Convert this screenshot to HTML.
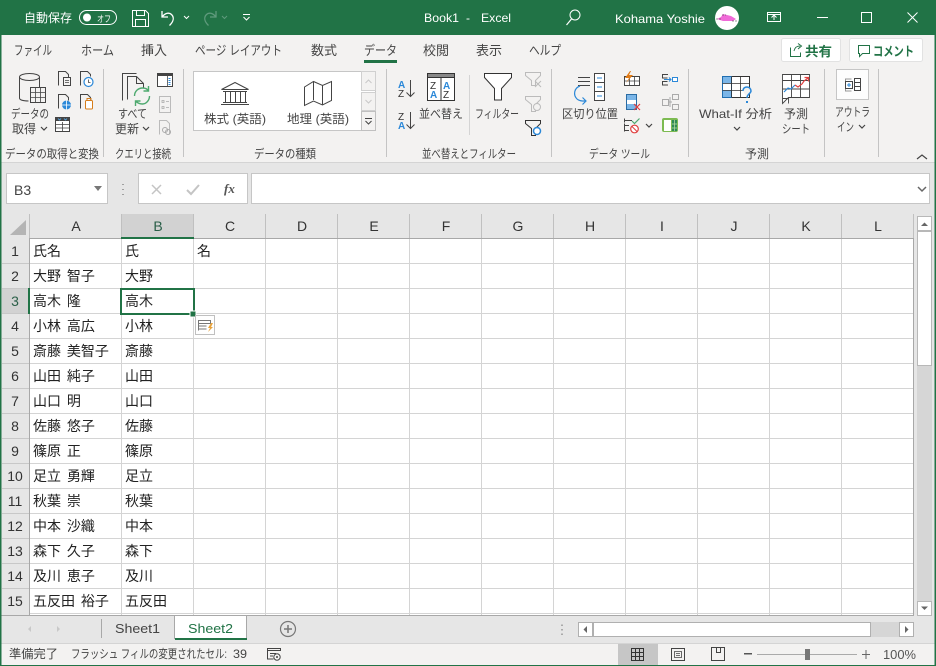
<!DOCTYPE html>
<html lang="ja"><head><meta charset="utf-8"><title>Book1 - Excel</title>
<style>
html,body{margin:0;padding:0;background:#e6e6e6;width:936px;height:666px;overflow:hidden}
svg{display:block;font-family:"Liberation Sans","Noto Sans CJK JP",sans-serif}
.r{font-size:12px;fill:#444}
.t{font-size:13px;fill:#444}
.g{font-size:14px;fill:#222;word-spacing:2px}
.h{font-size:14px;fill:#333;text-anchor:middle}
.w{font-size:12px;fill:#fff}
.i{fill:none;stroke:#444;stroke-width:1}
.l{fill:none;stroke:#b0b0b0;stroke-width:1}
</style></head><body>
<svg width="936" height="666" viewBox="0 0 936 666" xmlns="http://www.w3.org/2000/svg">
<defs><path id="c" d="M0 0l3 3 3-3" fill="none" stroke="#444" stroke-width="1.200"/></defs>
<rect width="936" height="666" fill="#e6e6e6"/>
<!-- title -->
<rect width="936" height="35" fill="#217346"/>
<text class="w" x="24" y="22" textLength="48" lengthAdjust="spacingAndGlyphs">自動保存</text>
<rect x="79.500" y="10.500" width="37" height="14" rx="7" fill="none" stroke="#fff"/>
<circle cx="87" cy="17.500" r="4" fill="#fff"/>
<text x="97" y="22" font-size="9" fill="#fff" textLength="14" lengthAdjust="spacingAndGlyphs">オフ</text>
<path d="M132.500 10.500h13l3 3v13h-16zM136.500 10.500v5h8v-5M135.500 26.500v-7h10v7" fill="none" stroke="#fff"/>
<path d="M162 11v6h6M162.500 16.500c3-4 7-4 9-2 3 3 2 7-2 11" fill="none" stroke="#fff" stroke-width="1.300"/>
<path d="M184 16l2.500 2.500 2.500-2.500" fill="none" stroke="#fff"/>
<path d="M216 11v6h-6M215.500 16.500c-3-4-7-4-9-2-3 3-2 7 2 11" fill="none" stroke="#5f9a7c" stroke-width="1.300"/>
<path d="M222 16l2.500 2.500 2.500-2.500" fill="none" stroke="#5f9a7c"/>
<path d="M243 14.500h7M243.500 17l3 3 3-3" fill="none" stroke="#fff"/>
<text class="w" x="424" y="22" textLength="35" lengthAdjust="spacingAndGlyphs">Book1</text>
<text class="w" x="466" y="22">-</text>
<text class="w" x="481" y="22" textLength="30" lengthAdjust="spacingAndGlyphs">Excel</text>
<circle cx="575" cy="15" r="5" fill="none" stroke="#fff"/><path d="M571.500 19l-5 6" stroke="#fff" stroke-width="1.200"/>
<text class="w" x="615" y="23" textLength="90" lengthAdjust="spacingAndGlyphs">Kohama Yoshie</text>
<circle cx="727" cy="18" r="12" fill="#fff"/>
<path d="M717 19l4-2 2-3 8 2 5 3-3 2h-10z" fill="#f06ad8"/><path d="M716 19h5M732 21h6M722 15h4" stroke="#333" stroke-width=".6" stroke-dasharray="2 1"/>
<path d="M767.500 12.500h13v9h-13zM767.500 14.500h13M774 20v-4.500M771.500 17.500l2.500-2.500 2.500 2.500" fill="none" stroke="#fff"/>
<rect x="817" y="17" width="11" height="1" fill="#fff"/>
<rect x="861.500" y="12.500" width="10" height="10" fill="none" stroke="#fff"/>
<path d="M907.500 12.500l10 10M917.500 12.500l-10 10" stroke="#fff"/>
<!-- ribbon -->
<rect y="35" width="936" height="128" fill="#f3f2f1"/>
<rect y="162" width="936" height="1" fill="#d4d4d4"/>
<text class="t" x="14" y="55" textLength="38" lengthAdjust="spacingAndGlyphs">ファイル</text>
<text class="t" x="81" y="55" textLength="33" lengthAdjust="spacingAndGlyphs">ホーム</text>
<text class="t" x="141" y="55" textLength="26" lengthAdjust="spacingAndGlyphs">挿入</text>
<text class="t" x="195" y="55" textLength="87" lengthAdjust="spacingAndGlyphs">ページ レイアウト</text>
<text class="t" x="311" y="55" textLength="26" lengthAdjust="spacingAndGlyphs">数式</text>
<text class="t" x="364" y="55" textLength="33" lengthAdjust="spacingAndGlyphs">データ</text>
<rect x="364" y="60" width="33" height="3" fill="#217346"/>
<text class="t" x="423" y="55" textLength="26" lengthAdjust="spacingAndGlyphs">校閲</text>
<text class="t" x="476" y="55" textLength="26" lengthAdjust="spacingAndGlyphs">表示</text>
<text class="t" x="529" y="55" textLength="32" lengthAdjust="spacingAndGlyphs">ヘルプ</text>
<!-- share / comment -->
<rect x="781.500" y="38.500" width="59" height="23" rx="2" fill="#fff" stroke="#e2e2e2"/>
<path d="M790.500 47.500v9h10v-4M794 51c1-4 3-5 6-5M798 43.500l3.500 2.500-3.500 3" fill="none" stroke="#217346"/>
<text x="805" y="56" font-size="13" font-weight="bold" fill="#217346" textLength="27" lengthAdjust="spacingAndGlyphs">共有</text>
<rect x="849.500" y="38.500" width="73" height="23" rx="2" fill="#fff" stroke="#e2e2e2"/>
<path d="M858.500 45.500h11v8h-7l-3 3v-3h-1z" fill="none" stroke="#217346"/>
<text x="873" y="56" font-size="13" font-weight="bold" fill="#217346" textLength="41" lengthAdjust="spacingAndGlyphs">コメント</text>
<!-- separators -->
<path d="M103.500 69v88M183.500 69v88M386.500 69v88M551.500 69v88M688.500 69v88M824.500 69v88M878.500 69v88" stroke="#c4c4c4"/>
<path d="M469.500 75v60" stroke="#d4d4d4"/>
<!-- group labels -->
<text class="r" x="5" y="158" textLength="94" lengthAdjust="spacingAndGlyphs">データの取得と変換</text>
<text class="r" x="115" y="158" textLength="56" lengthAdjust="spacingAndGlyphs">クエリと接続</text>
<text class="r" x="254" y="158" textLength="62" lengthAdjust="spacingAndGlyphs">データの種類</text>
<text class="r" x="422" y="158" textLength="94" lengthAdjust="spacingAndGlyphs">並べ替えとフィルター</text>
<text class="r" x="589" y="158" textLength="61" lengthAdjust="spacingAndGlyphs">データ ツール</text>
<text class="r" x="745" y="158" textLength="24" lengthAdjust="spacingAndGlyphs">予測</text>
<path d="M917 159l5-4 5 4" fill="none" stroke="#444" stroke-width="1.200"/>
<!-- get data -->
<ellipse cx="29.500" cy="77" rx="10" ry="3.500" class="i"/>
<path d="M19.500 77v21c0 2 4 3 9 3M39.500 77v10" class="i"/>
<rect x="30.500" y="87.500" width="15" height="15" fill="#f3f2f1" stroke="#444"/>
<path d="M30.500 92.500h15M30.500 97.500h15M35.500 87.500v15M40.500 87.500v15" stroke="#444" stroke-width=".8"/>
<text class="r" x="11" y="118" textLength="38" lengthAdjust="spacingAndGlyphs">データの</text>
<text class="r" x="12" y="133" textLength="24" lengthAdjust="spacingAndGlyphs">取得</text>
<use href="#c" x="41" y="127"/>
<path d="M58.500 85.500v-14h7l3 3v3" class="i"/><rect x="63.500" y="77.500" width="7" height="8" fill="#f3f2f1" stroke="#444"/><path d="M65 80.500h4M65 82.500h4" stroke="#444" stroke-width=".7"/>
<path d="M80.500 85.500v-14h7l3 3v2" class="i"/><circle cx="88.500" cy="82" r="4.500" fill="#fff" stroke="#2b88d8" stroke-width="1.200"/><path d="M88.500 79.500v3h2" stroke="#444" fill="none" stroke-width=".8"/>
<path d="M58.500 108.500v-14h7l3 3v3" class="i"/><circle cx="66.500" cy="105" r="4.500" fill="#2b88d8"/><path d="M62 105h9M66.500 100.500v9" stroke="#fff" stroke-width=".8"/>
<path d="M80.500 108.500v-14h7l3 3v2" class="i"/><rect x="85.500" y="100.500" width="7" height="8.500" rx="1" fill="#fff" stroke="#d67d1a"/><path d="M87 100v-1.500h4v1.500" stroke="#d67d1a" fill="none"/>
<rect x="55.500" y="117.500" width="14" height="14" fill="#fff" stroke="#444"/><rect x="56" y="118" width="13" height="3" fill="#444"/><path d="M55.500 124.500h14M55.500 128h14M62.500 122v9" stroke="#444" stroke-width=".8"/><path d="M58 118.500l1.500 1.500 1.500-1.500M64 118.500l1.500 1.500 1.500-1.500" stroke="#5ab0f0" fill="none" stroke-width=".8"/>
<!-- refresh -->
<path d="M122.500 100.500v-27h14M127.500 99.500v-23h9l7 7v5" class="i"/><path d="M136.500 76.500v7h7" class="i"/>
<path d="M134.500 96c0-5 4-8 8-8 3 0 5 1 6 3M149.500 96c0 5-4 8-7 8-3 0-5-1-7-3M148.500 86v5h-5M135.500 106v-5h5" fill="none" stroke="#4ea96f" stroke-width="1.400"/>
<text class="r" x="118" y="118" textLength="29" lengthAdjust="spacingAndGlyphs">すべて</text>
<text class="r" x="115" y="133" textLength="24" lengthAdjust="spacingAndGlyphs">更新</text>
<use href="#c" x="143" y="127"/>
<rect x="157.500" y="73.500" width="15" height="13" fill="#fff" stroke="#444"/><rect x="158" y="74" width="14" height="2" fill="#444"/><path d="M167.500 76v10" stroke="#444" stroke-width=".8"/><path d="M169.500 78v7" stroke="#2b88d8" stroke-dasharray="1 1" stroke-width="2"/>
<rect x="159.500" y="96.500" width="11" height="16" fill="none" stroke="#bbb"/><path d="M162 100.500h2v2h-2zM162 106.500h2v2h-2zM166 101.500h3M166 107.500h3" fill="none" stroke="#aaa" stroke-width=".8"/>
<path d="M159.500 134.500v-14h7l3 3v11" fill="none" stroke="#bbb"/><circle cx="165" cy="130" r="2.500" fill="none" stroke="#aaa"/><circle cx="168" cy="132" r="2.500" fill="none" stroke="#aaa"/>
<!-- gallery -->
<rect x="193.500" y="71.500" width="182" height="59" fill="#fff" stroke="#c6c6c6"/>
<rect x="361.500" y="71.500" width="14" height="19" fill="#f3f2f1" stroke="#d0d0d0"/>
<rect x="361.500" y="92.500" width="14" height="18" fill="#f3f2f1" stroke="#d0d0d0"/>
<rect x="361.500" y="111.500" width="14" height="19" fill="#f3f2f1" stroke="#c0c0c0"/>
<path d="M365.500 83l3-3 3 3" fill="none" stroke="#c8c8c8"/><path d="M365.500 100l3 3 3-3" fill="none" stroke="#c8c8c8"/>
<path d="M365 118.500h7M365.500 121l3 3 3-3" fill="none" stroke="#444"/>
<path d="M221.500 89.500l13.500-7 13.500 7zM223 91.500h24M225.500 92v10M230.500 92v10M235.500 92v10M240.500 92v10M245.500 92v10M223 102.500h24M221 104.500h28" class="i"/>
<path d="M304.500 87l9-5.500 9 4 9-4v19l-9 4.500-9-4-9 4.500zM313.500 81.500v18.500M322.500 85.500v19" class="i"/>
<text class="r" x="204" y="123" textLength="62" lengthAdjust="spacingAndGlyphs">株式 (英語)</text>
<text class="r" x="287" y="123" textLength="62" lengthAdjust="spacingAndGlyphs">地理 (英語)</text>
<!-- sort -->
<text x="398" y="88" font-size="10" font-weight="bold" fill="#2b88d8">A</text><text x="398" y="97" font-size="10" fill="#333">Z</text>
<path d="M410.500 80v16M406.500 92.500l4 4 4-4" class="i"/>
<text x="398" y="120" font-size="10" fill="#333">Z</text><text x="398" y="129" font-size="10" font-weight="bold" fill="#2b88d8">A</text>
<path d="M410.500 112v16M406.500 124.500l4 4 4-4" class="i"/>
<rect x="427.500" y="73.500" width="27" height="27" fill="#fff" stroke="#333"/><rect x="427.500" y="73.500" width="27" height="4" fill="#888" stroke="#333"/><path d="M441 78v22" stroke="#333"/>
<text x="430" y="89" font-size="10" fill="#333">Z</text><text x="430" y="98" font-size="10" font-weight="bold" fill="#2b88d8">A</text>
<text x="443" y="89" font-size="10" font-weight="bold" fill="#2b88d8">A</text><text x="443" y="98" font-size="10" fill="#333">Z</text>
<text class="r" x="419" y="118" textLength="44" lengthAdjust="spacingAndGlyphs">並べ替え</text>
<path d="M484.500 73.500h27v4l-10 11v11.500h-7v-11.500l-10-11z" fill="#fff" stroke="#333"/>
<text class="r" x="475" y="118" textLength="44" lengthAdjust="spacingAndGlyphs">フィルター</text>
<path d="M525.500 72.500h15v3l-5 5v5h-4v-5l-6-5z" fill="none" stroke="#bbb"/><path d="M535 81l6 6M541 81l-6 6" stroke="#bbb"/>
<path d="M525.500 96.500h15v3l-5 5v7h-4v-7l-6-5z" fill="none" stroke="#bbb"/><circle cx="537" cy="107" r="3.500" fill="#f3f2f1" stroke="#bbb"/>
<path d="M525.500 120.500h15v3l-5 5v7h-4v-7l-6-5z" fill="none" stroke="#333"/><circle cx="537" cy="131" r="3.500" fill="#fff" stroke="#2b88d8" stroke-width="1.500"/>
<!-- data tools -->
<path d="M578 77.500h12M578 81.500h12M578 85.500h12" stroke="#444"/>
<rect x="594.500" y="73.500" width="10" height="27" fill="#fff" stroke="#444"/><path d="M594.500 82.500h10M594.500 91.500h10" stroke="#444"/><path d="M597 78h5M597 87h5M597 96h5" stroke="#2b88d8"/>
<path d="M580 86c-6 2-7 9-3 13 2 2 5 2 8 2M582.500 97.500l3.500 3.500-3.500 3.500" fill="none" stroke="#2b88d8" stroke-width="1.200"/>
<text class="r" x="562" y="118" textLength="56" lengthAdjust="spacingAndGlyphs">区切り位置</text>
<rect x="624.500" y="76.500" width="15" height="9" fill="#fff" stroke="#444"/><path d="M629.500 76v10M634.500 76v10M624.500 81h15" stroke="#444" stroke-width=".8"/><path d="M630 71l-5 7h4l-3 5 7-8h-4l2-4z" fill="#e07b16"/>
<rect x="626.500" y="94.500" width="10" height="15" fill="#fff" stroke="#2b6ca3"/><rect x="627" y="95" width="9" height="5" fill="#7bb6e8"/><rect x="627" y="104" width="9" height="5" fill="#7bb6e8"/><path d="M634 104l6 6M640 104l-6 6" stroke="#e04040" stroke-width="1.200"/>
<path d="M625 120.500h7M625 125.500h4M625 130.500h4M624.500 118.500v4M624.500 123.500v8" fill="none" stroke="#444"/><path d="M632 121l2.500 2.500 5-5" fill="none" stroke="#4ea96f" stroke-width="1.200"/><circle cx="634.500" cy="129" r="3.800" fill="#fff" stroke="#e04040" stroke-width="1.200"/><path d="M632 126.500l5 5" stroke="#e04040"/>
<use href="#c" x="646" y="124"/>
<path d="M668 74.500h-5.500v3.500h5M668 85h-5.500v-3.500h5" fill="none" stroke="#444"/><path d="M664 79.500h7M669 77.500l2 2-2 2" fill="none" stroke="#2b88d8"/><rect x="672.500" y="77.500" width="5" height="4" fill="#fff" stroke="#2b88d8"/>
<rect x="662.500" y="99.500" width="6" height="6" fill="none" stroke="#aaa"/><rect x="672.500" y="94.500" width="6" height="5" fill="none" stroke="#aaa"/><rect x="672.500" y="104.500" width="6" height="5" fill="none" stroke="#aaa"/><path d="M668 102h4M670 97v10" stroke="#aaa"/>
<rect x="662" y="118" width="16" height="14" rx="2" fill="#7dbb52"/><rect x="664" y="120" width="7" height="11" fill="#fff"/><rect x="672" y="120" width="5" height="11" fill="#2e8b57"/><path d="M672 124h5M672 128h5M674.500 120v11" stroke="#bfe0a8" stroke-width=".7"/>
<!-- what-if -->
<rect x="722.500" y="76.500" width="27" height="21" fill="#fff" stroke="#333"/>
<rect x="723" y="77" width="8" height="6.500" fill="#7bb6e8"/><rect x="723" y="90" width="8" height="7" fill="#7bb6e8"/><rect x="722.500" y="76.500" width="9" height="21" fill="none" stroke="#1f6eb0"/>
<path d="M722.500 83.500h27M722.500 90.500h27M731.500 76.500v21M740.500 76.500v21" stroke="#333" stroke-width=".8"/>
<path d="M743 91c0-3 2-4 4-4s4 1.500 4 4-4 3-4 7" fill="#f3f2f1" stroke="#2b88d8" stroke-width="1.500"/><rect x="746" y="101" width="2" height="2" fill="#2b88d8"/>
<text class="r" x="699" y="118" textLength="73" lengthAdjust="spacingAndGlyphs">What-If 分析</text>
<use href="#c" x="734" y="127"/>
<path d="M782.500 74.500h27v23h-21l-6 6v-6zM782.500 97.500v-23M782.500 80.500h27M791.500 74.500v23M800.500 74.500v23M782.500 89h27M782.500 98.500h6v5" fill="#fff" stroke="#444" stroke-width=".9"/>
<path d="M784 92l4-4 3 1 4-4" fill="none" stroke="#2b88d8" stroke-width="1.200"/><path d="M795 85l3 2 4-3 2-3 4-3M804.500 77.500h4v4" fill="none" stroke="#e04040" stroke-width="1.200"/>
<text class="r" x="784" y="118" textLength="24" lengthAdjust="spacingAndGlyphs">予測</text>
<text class="r" x="782" y="133" textLength="28" lengthAdjust="spacingAndGlyphs">シート</text>
<!-- outline -->
<rect x="836.500" y="69.500" width="32" height="30" fill="#fdfdfd" stroke="#c6c6c6"/>
<rect x="845.500" y="81.500" width="7" height="7" fill="#fff" stroke="#444"/><path d="M847 85h4M849 83v4" stroke="#2b88d8"/>
<path d="M845.500 81v-2h6M845.500 89v2h6" fill="none" stroke="#999"/>
<rect x="854.500" y="78.500" width="6" height="12" fill="#fff" stroke="#444"/><path d="M854.500 82.500h6M854.500 86.500h6" stroke="#444"/>
<text class="r" x="835" y="116" textLength="35" lengthAdjust="spacingAndGlyphs">アウトラ</text>
<text class="r" x="837" y="131" textLength="17" lengthAdjust="spacingAndGlyphs">イン</text>
<use href="#c" x="859" y="125"/>
<!-- formula bar -->
<rect x="6.500" y="173.500" width="101" height="30" fill="#fff" stroke="#c6c6c6"/>
<text x="14" y="195" font-size="14" fill="#444">B3</text>
<path d="M94 186h8l-4 5z" fill="#777"/>
<path d="M123 184v1M123 189v1M123 194v1" stroke="#a0a0a0" stroke-width="2"/>
<rect x="138.500" y="173.500" width="109" height="30" fill="#fff" stroke="#c6c6c6"/>
<path d="M152 185l9 9M161 185l-9 9" stroke="#c4c4c4" stroke-width="1.500"/>
<path d="M187 190l4 4 8-9" fill="none" stroke="#c4c4c4" stroke-width="2"/>
<text x="224" y="193" font-size="13" font-style="italic" font-weight="bold" font-family="Liberation Serif,serif" fill="#555">fx</text>
<rect x="251.500" y="173.500" width="678" height="30" fill="#fff" stroke="#c6c6c6"/>
<path d="M918 187l4 4 4-4" fill="none" stroke="#666" stroke-width="1.500"/>
<!-- grid -->
<rect x="29" y="239" width="885" height="376" fill="#fff"/>
<path fill="none" stroke="#d4d4d4" d="M29 263.500h885M29 288.500h885M29 313.500h885M29 338.500h885M29 363.500h885M29 388.500h885M29 413.500h885M29 438.500h885M29 463.500h885M29 488.500h885M29 513.500h885M29 538.500h885M29 563.500h885M29 588.500h885M29 613.500h885M121.500 239v376M193.500 239v376M265.500 239v376M337.500 239v376M409.500 239v376M481.500 239v376M553.500 239v376M625.500 239v376M697.500 239v376M769.500 239v376M841.500 239v376"/>
<!-- headers -->
<rect x="0" y="214" width="936" height="25" fill="#e6e6e6"/>
<rect x="121" y="214" width="73" height="24" fill="#d2d2d2"/>
<path d="M26 235v-15l-16 15z" fill="#b4b4b4"/>
<path d="M29.500 214v25M121.500 214v24M193.500 214v24M265.500 214v24M337.500 214v24M409.500 214v24M481.500 214v24M553.500 214v24M625.500 214v24M697.500 214v24M769.500 214v24M841.500 214v24M913.500 214v24" stroke="#c0c0c0"/>
<rect x="29" y="238" width="885" height="1" fill="#a8a8a8"/>
<rect x="121" y="237" width="73" height="2" fill="#217346"/>
<path d="M913.500 238v377" stroke="#a8a8a8"/>
<rect x="0" y="615" width="914" height="1" fill="#a8a8a8"/>
<path d="M2 263.500h27M2 288.500h27M2 313.500h27M2 338.500h27M2 363.500h27M2 388.500h27M2 413.500h27M2 438.500h27M2 463.500h27M2 488.500h27M2 513.500h27M2 538.500h27M2 563.500h27M2 588.500h27" stroke="#c8c8c8"/>
<rect x="2" y="289" width="27" height="24" fill="#d2d2d2"/>
<path d="M29.500 239v376" stroke="#a8a8a8"/>
<rect x="28" y="288" width="2" height="26" fill="#217346"/>
<g><text class="h" x="76" y="231">A</text><text class="h" x="158" y="231" style="fill:#2a5f48">B</text><text class="h" x="230" y="231">C</text><text class="h" x="302" y="231">D</text><text class="h" x="374" y="231">E</text><text class="h" x="446" y="231">F</text><text class="h" x="518" y="231">G</text><text class="h" x="590" y="231">H</text><text class="h" x="662" y="231">I</text><text class="h" x="734" y="231">J</text><text class="h" x="806" y="231">K</text><text class="h" x="878" y="231">L</text></g>
<g><text class="h" x="15" y="256">1</text><text class="h" x="15" y="281">2</text><text class="h" x="15" y="306" style="fill:#2a5f48">3</text><text class="h" x="15" y="331">4</text><text class="h" x="15" y="356">5</text><text class="h" x="15" y="381">6</text><text class="h" x="15" y="406">7</text><text class="h" x="15" y="431">8</text><text class="h" x="15" y="456">9</text><text class="h" x="15" y="481">10</text><text class="h" x="15" y="506">11</text><text class="h" x="15" y="531">12</text><text class="h" x="15" y="556">13</text><text class="h" x="15" y="581">14</text><text class="h" x="15" y="606">15</text></g>
<!-- cells -->
<g>
<text class="g" x="33" y="256">氏名</text><text class="g" x="125" y="256">氏</text><text class="g" x="197" y="256">名</text>
<text class="g" x="33" y="281">大野 智子</text><text class="g" x="125" y="281">大野</text>
<text class="g" x="33" y="306">高木 隆</text><text class="g" x="125" y="306">高木</text>
<text class="g" x="33" y="331">小林 高広</text><text class="g" x="125" y="331">小林</text>
<text class="g" x="33" y="356">斎藤 美智子</text><text class="g" x="125" y="356">斎藤</text>
<text class="g" x="33" y="381">山田 純子</text><text class="g" x="125" y="381">山田</text>
<text class="g" x="33" y="406">山口 明</text><text class="g" x="125" y="406">山口</text>
<text class="g" x="33" y="431">佐藤 悠子</text><text class="g" x="125" y="431">佐藤</text>
<text class="g" x="33" y="456">篠原 正</text><text class="g" x="125" y="456">篠原</text>
<text class="g" x="33" y="481">足立 勇輝</text><text class="g" x="125" y="481">足立</text>
<text class="g" x="33" y="506">秋葉 崇</text><text class="g" x="125" y="506">秋葉</text>
<text class="g" x="33" y="531">中本 沙織</text><text class="g" x="125" y="531">中本</text>
<text class="g" x="33" y="556">森下 久子</text><text class="g" x="125" y="556">森下</text>
<text class="g" x="33" y="581">及川 恵子</text><text class="g" x="125" y="581">及川</text>
<text class="g" x="33" y="606">五反田 裕子</text><text class="g" x="125" y="606">五反田</text>
</g>
<!-- selection -->
<rect x="121" y="289" width="73" height="25" fill="none" stroke="#217346" stroke-width="2"/>
<rect x="190" y="311" width="6" height="6" fill="#217346" stroke="#fff" stroke-width="1"/>
<rect x="195.500" y="315.500" width="19" height="19" fill="#fff" stroke="#c0c0c0"/>
<path d="M198.500 320.500h12v3h-12zM198.500 326h8M198.500 329h8M198.500 320.500v10" fill="none" stroke="#777"/>
<path d="M211 323l-3 5h2l-2 4 5-5h-2l2-4z" fill="#e8a33c"/>
<!-- v scroll -->
<rect x="917" y="216" width="15" height="399" fill="#d6d6d6"/>
<rect x="917.500" y="216.500" width="14" height="14" fill="#fff" stroke="#b8b8b8"/>
<rect x="917.500" y="231.500" width="14" height="134" fill="#fff" stroke="#b8b8b8"/>
<rect x="917.500" y="601.500" width="14" height="14" fill="#fff" stroke="#b8b8b8"/>
<path d="M921 226l3.500-3.500 3.500 3.500z" fill="#666"/>
<path d="M921 606.500h7l-3.500 3.500z" fill="#666"/>
<!-- tabs -->
<path d="M31 626v6l-3-3zM57 626v6l3-3z" fill="#c8c8c8"/>
<path d="M101.500 619v19" stroke="#a8a8a8"/>
<text x="115" y="633" font-size="13" fill="#444" textLength="45" lengthAdjust="spacingAndGlyphs">Sheet1</text>
<path d="M174.500 616v23M246.500 616v23" stroke="#a8a8a8"/>
<rect x="175" y="616" width="71" height="22" fill="#fff"/>
<rect x="175" y="638" width="72" height="2" fill="#217346"/>
<text x="188" y="633" font-size="13" fill="#217346" textLength="45" lengthAdjust="spacingAndGlyphs">Sheet2</text>
<circle cx="288" cy="629" r="7.500" fill="none" stroke="#777" stroke-width="1.200"/>
<path d="M284 629h8M288 625v8" stroke="#777" stroke-width="1.500"/>
<path d="M562 624.500v1.500M562 629v1.500M562 633.500v1.500" stroke="#aaa" stroke-width="2"/>
<rect x="578" y="622" width="336" height="15" fill="#d6d6d6"/>
<rect x="578.500" y="622.500" width="14" height="14" fill="#fff" stroke="#b0b0b0"/>
<rect x="593.500" y="622.500" width="277" height="14" fill="#fff" stroke="#b0b0b0"/>
<rect x="899.500" y="622.500" width="14" height="14" fill="#fff" stroke="#b0b0b0"/>
<path d="M587 626v7l-3.500-3.500z" fill="#666"/><path d="M905 626v7l3.500-3.500z" fill="#666"/>
<!-- status -->
<rect y="643" width="936" height="22" fill="#f3f2f1"/>
<rect y="643" width="936" height="1" fill="#d4d4d4"/>
<text class="r" x="9" y="658" textLength="49" lengthAdjust="spacingAndGlyphs">準備完了</text>
<text class="r" x="71" y="658" textLength="156" lengthAdjust="spacingAndGlyphs">フラッシュ フィルの変更されたセル:</text>
<text class="r" x="233" y="658" textLength="14" lengthAdjust="spacingAndGlyphs">39</text>
<path d="M267.500 648.500h13v2h-13zM267.500 650v9h6M270 653.500h6M270 656h3" fill="none" stroke="#444"/><circle cx="277" cy="657" r="3.200" fill="#f3f2f1" stroke="#444"/><circle cx="277" cy="657" r="1" fill="#444"/>
<rect x="618" y="644" width="40" height="21" fill="#c6c6c6"/>
<path d="M631.500 648.500h12v12h-12zM631.500 652.500h12M631.500 656.500h12M635.500 648.500v12M639.500 648.500v12" fill="none" stroke="#333"/>
<rect x="671.500" y="648.500" width="13" height="12" fill="none" stroke="#444"/><path d="M674.500 651.500h7v6h-7zM676 653.500h4M676 655.500h4" fill="none" stroke="#444" stroke-width=".8"/>
<path d="M711.500 647.500h13v13h-13zM716.500 647.500v5h4v-5" fill="none" stroke="#444"/>
<rect x="744" y="653" width="8" height="1.500" fill="#555"/>
<rect x="757" y="654" width="100" height="1" fill="#aaa"/>
<rect x="805" y="649" width="5" height="11" fill="#777"/>
<path d="M862 654.500h8M866 650v9" stroke="#666"/>
<text x="883" y="659" font-size="13" fill="#555" textLength="33" lengthAdjust="spacingAndGlyphs">100%</text>
<!-- frame -->
<rect x="0" y="35" width="1.500" height="631" fill="#217346"/>
<rect x="934.500" y="35" width="1.500" height="631" fill="#217346"/>
<rect x="0" y="665" width="936" height="1" fill="#217346"/>
</svg>
</body></html>
